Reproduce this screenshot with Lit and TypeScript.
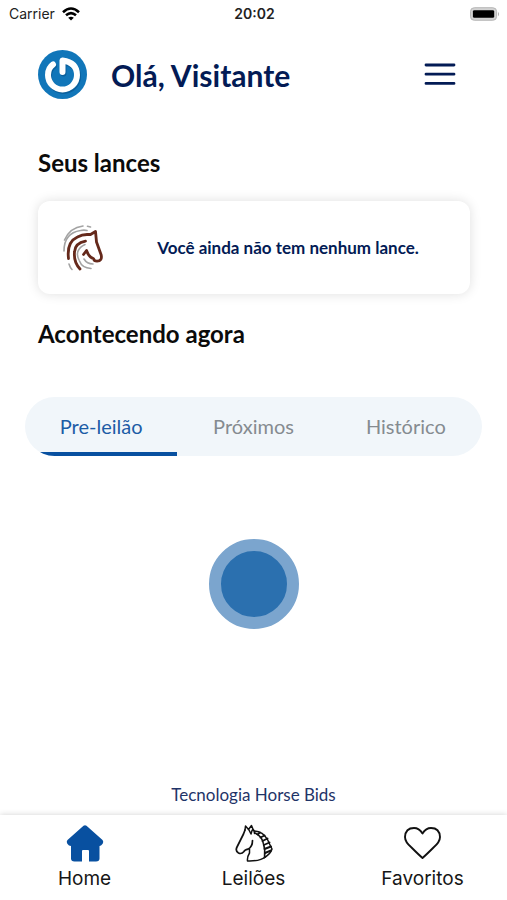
import { LitElement, html, css, svg } from "lit";
import { customElement, property, state } from "lit/decorators.js";
import { classMap } from "lit/directives/class-map.js";

@customElement("status-bar")
class StatusBar extends LitElement {
  static styles = css`
    :host {
      display: grid;
      grid-template-columns: 1fr auto 1fr;
      align-items: center;
      height: 28px;
      padding: 0 7px 0 9px;
      font: 14px/20px Inter, "Liberation Sans", sans-serif;
      color: #222;
    }
    .carrier {
      display: flex;
      align-items: center;
      gap: 7px;
    }
    .time {
      font-weight: 600;
    }
    .battery {
      justify-self: end;
    }
    svg {
      display: block;
    }
  `;
  render() {
    return html`
      <div class="carrier">
        <span>Carrier</span>
        <svg width="18" height="14" viewBox="0 0 18 14" fill="none" stroke="#000" stroke-width="2.6">
          <path d="M1 5.2Q9 -2.2 17 5.2" />
          <path d="M4 8.3Q9 4 14 8.3" />
          <path d="M9 13.6L6.2 10.7Q9 8.6 11.8 10.7Z" fill="#000" stroke="none" />
        </svg>
      </div>
      <span class="time">20:02</span>
      <svg class="battery" width="30" height="14" viewBox="0 0 31 14">
        <rect x="0.5" y="0.5" width="27" height="13" rx="4" fill="#d2d2d2" stroke="#b4b4b4" />
        <rect x="3" y="3" width="22" height="8" rx="1.5" fill="#000" />
        <path d="M29 4.6Q31 7 29 9.4Z" fill="#aaa" />
      </svg>
    `;
  }
}

@customElement("page-header")
class PageHeader extends LitElement {
  static styles = css`
    :host {
      display: flex;
      align-items: center;
      gap: 24px;
      padding: 22px 51px 0 38px;
    }
    svg {
      display: block;
    }
    h1 {
      flex: 1;
      margin: 0;
      font-size: 30px;
      line-height: 36px;
      font-weight: 700;
      color: #031b55;
    }
    button {
      padding: 0;
      border: 0;
      background: none;
      cursor: pointer;
    }
  `;
  render() {
    return html`
      <svg width="49" height="49" viewBox="0 0 49 49" fill="none">
        <circle cx="24.5" cy="24.5" r="24.5" fill="#1176b9" />
        <g stroke-width="6" stroke-linecap="round">
          <path d="M15 15Q10 18 10 25.500A14.500 14.500 0 0 0 39 25.500Q39 13.500 24.500 11V22.500" stroke="#0a5f9c" transform="translate(1 1)" />
          <path d="M15 14.500Q10 18 10 25A14.500 14.500 0 0 0 39 25Q39 12.500 24.500 10.500V22" stroke="#fff" stroke-linejoin="round" />
        </g>
      </svg>
      <h1>Olá, Visitante</h1>
      <button aria-label="Menu">
        <svg width="32" height="24" viewBox="0 0 32 24" stroke="#031b55" stroke-width="2.800" stroke-linecap="round">
          <path d="M2 2H30M2 11.200H30M2 20.400H30" />
        </svg>
      </button>
    `;
  }
}

@customElement("bids-card")
class BidsCard extends LitElement {
  static styles = css`
    :host {
      display: flex;
      align-items: center;
      padding: 22px 24px;
      border-radius: 12px;
      background: #fff;
      box-shadow: 0 0 12px rgba(0, 0, 0, 0.13);
    }
    svg {
      display: block;
      flex: none;
    }
    p {
      flex: 1;
      margin: 0;
      padding-left: 24px;
      text-align: center;
      font-size: 17px;
      line-height: 24px;
      font-weight: 700;
      color: #031b55;
    }
  `;
  render() {
    return html`
      <svg width="44" height="49" viewBox="0 0 44 49" fill="none" stroke-linecap="round" stroke-linejoin="round">
        <g stroke="#a3a3a3" stroke-width="1.600">
          <path d="M2.500 17Q8 4.500 21 3" />
          <path d="M25.500 3.200L28.500 4" />
          <path d="M2 28Q2 10 18.500 7.500Q22 6.800 25 7.500" />
          <path d="M7 41Q8 44.500 10 46.500" />
          <path d="M17 37Q12 27 23 21.500" />
          <path d="M22 36Q25 41 31 41" />
          <path d="M17.500 38Q20 45 29 45.500" />
        </g>
        <g stroke="#65291b" stroke-width="2.800">
          <path d="M6.500 35.500Q4.500 19 15.500 14Q20 11.500 25 11.500H28.500L33.500 8.500L34.500 19L39.200 32Q40.500 38 35 38.200Q32 38.200 31.500 35.500Q27 34.500 24.500 27.500L21.500 31.500" />
          <path d="M23.500 18.200Q13 20 12.500 29Q11.500 39 18 46" />
        </g>
      </svg>
      <p>Você ainda não tem nenhum lance.</p>
    `;
  }
}

@customElement("auction-tabs")
class AuctionTabs extends LitElement {
  @state() active = 0;
  static styles = css`
    :host {
      display: grid;
      grid-template-columns: repeat(3, 1fr);
      height: 59px;
      border-radius: 30px;
      overflow: hidden;
      background: #f1f6fa;
    }
    button {
      padding: 2px 0 0;
      border: 0;
      border-bottom: 4px solid transparent;
      background: none;
      font: inherit;
      font-size: 20px;
      line-height: 24px;
      color: #858b90;
      cursor: pointer;
    }
    .active {
      color: #1c5ca6;
      border-bottom-color: #0850a0;
    }
  `;
  render() {
    return ["Pre-leilão", "Próximos", "Histórico"].map(
      (label, i) => html`<button
        role="tab"
        aria-selected=${i === this.active}
        class=${classMap({ active: i === this.active })}
        @click=${() => (this.active = i)}
      >${label}</button>`
    );
  }
}

const icons = {
  home: svg`<path d="M17.500 1.800Q19 .6 20.500 1.800L36.500 16Q38.500 19 35 21.500L33.500 22V34.500Q33.500 37.500 30 37.500H23V27Q23 26 22 26H17Q16 26 16 27V37.500H8.500Q5 37.500 5 34.500V22L3 21.500Q-.5 19 1.500 16Z" fill="#0850a0" />`,
  horse: svg`<g fill="none" stroke="#111" stroke-width="1.500" stroke-linejoin="round" stroke-linecap="round">
    <path d="M10 6L10.500 2L13.500 5.500L16.500 1.500L18.500 6.500" />
    <path d="M10 6L8.500 10L2 23Q0 27 3.500 29Q6.500 30.500 9 27.500Q9.500 26 13 25.200Q17.500 23 17.500 16.500" stroke-width="1.700" />
    <path d="M14.500 25V29Q12 33 12.500 37Q25 37.500 31 32.500" />
    <path d="M14 6L16 10L17 6.500M17 6.500Q19 4 19.500 9.500" />
    <path d="M20 9Q27 12 28.500 20Q30.500 26 29.500 33.500" />
    <path d="M19.500 7Q28 7.500 32.500 15.500Q34.500 20 37 25Q35.500 30 29.500 33.500" />
    <path d="M22.500 10.500L25 8.500M25.500 13.500L29.500 11.500M27.500 17L32.500 14.500M28.800 21L34.500 18.500M29.500 25L36 22.500M30 29L36 26.500" stroke-width="1.900" />
  </g>`,
  heart: svg`<path d="M18.500 34Q14.500 30.500 7.500 23.500Q1 18 1 13Q1.500 4 10 4Q15 4 18.500 9.500Q22 4 27 4Q35.500 4 36 13Q36 18 29.500 23.500Q22.500 30.500 18.500 34Z" fill="none" stroke="#111" stroke-width="1.900" stroke-linejoin="round" />`,
};

@customElement("nav-item")
class NavItem extends LitElement {
  @property() label = "";
  @property() icon: keyof typeof icons = "home";
  static styles = css`
    a {
      display: flex;
      flex-direction: column;
      align-items: center;
      gap: 5px;
      color: #161616;
      text-decoration: none;
      font: 19px/24px Inter, "Liberation Sans", sans-serif;
    }
    svg {
      display: block;
    }
  `;
  render() {
    return html`<a href="#${this.icon}">
      <svg width="38" height="38" viewBox="0 0 38 38">${icons[this.icon]}</svg>
      <span>${this.label}</span>
    </a>`;
  }
}

@customElement("app-root")
class AppRoot extends LitElement {
  static styles = css`
    :host {
      display: flex;
      flex-direction: column;
      min-height: 100vh;
      background: #fff;
      font-family: Lato, "Noto Sans", sans-serif;
    }
    main {
      flex: 1;
      display: flex;
      flex-direction: column;
    }
    h2 {
      margin: 0 38px;
      font-size: 24px;
      line-height: 32px;
      font-weight: 700;
      color: #0b0b0b;
    }
    .bids {
      margin-top: 48px;
    }
    bids-card {
      margin: 22px 37px 24px 38px;
    }
    auction-tabs {
      margin: 47px 25px 0;
    }
    .content {
      flex: 1;
      display: grid;
      place-items: center;
      padding: 24px 0 96px;
    }
    .pulse {
      box-sizing: border-box;
      width: 90px;
      height: 90px;
      border: 12px solid #7ba5ce;
      border-radius: 50%;
      background: #2b70af;
    }
    footer {
      padding-bottom: 8px;
      text-align: center;
      font-size: 17px;
      line-height: 24px;
      color: #1f3468;
    }
    nav {
      display: grid;
      grid-template-columns: repeat(3, 1fr);
      padding: 9px 0;
      background: #fff;
      box-shadow: 0 0 6px rgba(0, 0, 0, 0.18);
    }
  `;
  render() {
    return html`
      <status-bar></status-bar>
      <page-header></page-header>
      <main>
        <h2 class="bids">Seus lances</h2>
        <bids-card></bids-card>
        <h2>Acontecendo agora</h2>
        <auction-tabs role="tablist"></auction-tabs>
        <div class="content"><div class="pulse" role="status" aria-label="Carregando"></div></div>
      </main>
      <footer>Tecnologia Horse Bids</footer>
      <nav>
        <nav-item label="Home" icon="home"></nav-item>
        <nav-item label="Leilões" icon="horse"></nav-item>
        <nav-item label="Favoritos" icon="heart"></nav-item>
      </nav>
    `;
  }
}
